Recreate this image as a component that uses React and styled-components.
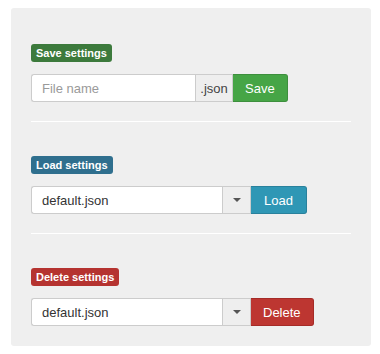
import styled, { createGlobalStyle } from "styled-components";

const GlobalStyle = createGlobalStyle`
  body {
    margin: 0;
    background: #fff;
    font-family: "Liberation Sans", Arial, sans-serif;
  }
`;

const Page = styled.div`
  padding: 8px 9px 8px 11px;
`;

const Panel = styled.div`
  width: 360px;
  box-sizing: border-box;
  background: #efefef;
  border-radius: 3px;
  padding: 36px 20px 20px;
`;

const Section = styled.div`
  display: flex;
  flex-direction: column;
  align-items: flex-start;
  gap: 12px;
`;

const Badge = styled.span`
  display: inline-flex;
  align-items: center;
  height: 18px;
  padding: 0 5px;
  border-radius: 3px;
  background: ${(p) => p.color};
  color: #fff;
  font-size: 11px;
  font-weight: 700;
`;

const Divider = styled.div`
  height: 1px;
  background: #fff;
  margin: 19px 0 34px;
`;

const Group = styled.div`
  display: flex;
  height: 28px;
`;

const Field = styled.div`
  width: ${(p) => p.width}px;
  box-sizing: border-box;
  display: flex;
  align-items: center;
  padding-left: 10px;
  background: #fff;
  border: 1px solid #ccc;
  border-right: none;
  border-radius: 3px 0 0 3px;
  font-size: 13px;
  color: ${(p) => (p.placeholder ? "#9a9a9a" : "#333")};
`;

const Addon = styled.div`
  width: ${(p) => p.width}px;
  box-sizing: border-box;
  display: flex;
  align-items: center;
  justify-content: center;
  background: #eee;
  border: 1px solid #ccc;
  font-size: 13px;
  color: #444;
`;

const Button = styled.button`
  box-sizing: border-box;
  height: 28px;
  padding: 0 ${(p) => p.pad || 12}px;
  border: 1px solid ${(p) => p.border};
  border-left: none;
  border-radius: 0 3px 3px 0;
  background: ${(p) => p.bg};
  color: #fff;
  font-family: inherit;
  font-size: 13px;
`;

const Caret = () => (
  <svg width="8" height="4" viewBox="0 0 8 4">
    <path d="M0 0 L8 0 L4 4 Z" fill="#555" />
  </svg>
);

export default function App() {
  return (
    <Page>
      <GlobalStyle />
      <Panel>
        <Section>
          <Badge color="#3c7a3c">Save settings</Badge>
          <Group>
            <Field width={164} placeholder>File name</Field>
            <Addon width={38}>.json</Addon>
            <Button bg="#46a546" border="#3d8f3d">Save</Button>
          </Group>
        </Section>
        <Divider />
        <Section>
          <Badge color="#2f6f8e">Load settings</Badge>
          <Group>
            <Field width={191}>default.json</Field>
            <Addon width={29}><Caret /></Addon>
            <Button bg="#2f97b5" border="#29819c" pad={13}>Load</Button>
          </Group>
        </Section>
        <Divider />
        <Section>
          <Badge color="#b53330">Delete settings</Badge>
          <Group>
            <Field width={191}>default.json</Field>
            <Addon width={29}><Caret /></Addon>
            <Button bg="#bd3631" border="#a52b27">Delete</Button>
          </Group>
        </Section>
      </Panel>
    </Page>
  );
}
